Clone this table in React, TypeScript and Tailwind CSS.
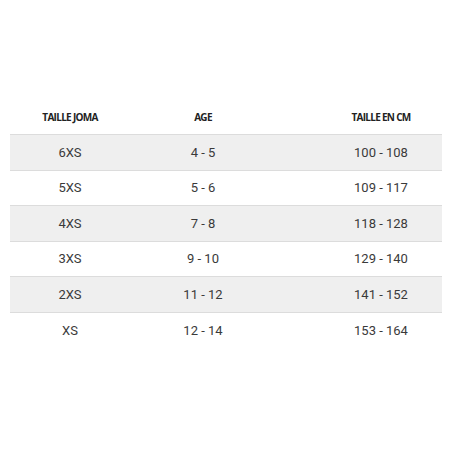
const rows = [
  ["6XS", "4 - 5", "100 - 108"],
  ["5XS", "5 - 6", "109 - 117"],
  ["4XS", "7 - 8", "118 - 128"],
  ["3XS", "9 - 10", "129 - 140"],
  ["2XS", "11 - 12", "141 - 152"],
  ["XS", "12 - 14", "153 - 164"],
];

export default function App() {
  return (
    <div className="h-[452px] w-[452px] bg-white px-[10px] pt-[106px] font-['Roboto',sans-serif] text-[#3a3a3a]">
      <div className="grid h-[28px] grid-cols-[120px_146px_1fr] items-center pb-[6px] font-['Open_Sans',sans-serif] text-[10px] font-bold tracking-[-0.07em] text-[#222]">
        <div className="text-center">TAILLE JOMA</div>
        <div className="text-center">AGE</div>
        <div className="pl-[44px] text-center">TAILLE EN CM</div>
      </div>
      {rows.map((r, i) => (
        <div
          key={r[0]}
          className={`grid h-[35.6px] grid-cols-[120px_146px_1fr] items-center border-t border-[#dcdcdc] text-[13px] ${
            i % 2 === 0 ? "bg-[#efefef]" : "bg-white"
          }`}
        >
          <div className="text-center">{r[0]}</div>
          <div className="text-center">{r[1]}</div>
          <div className="pl-[44px] text-center">{r[2]}</div>
        </div>
      ))}
    </div>
  );
}
